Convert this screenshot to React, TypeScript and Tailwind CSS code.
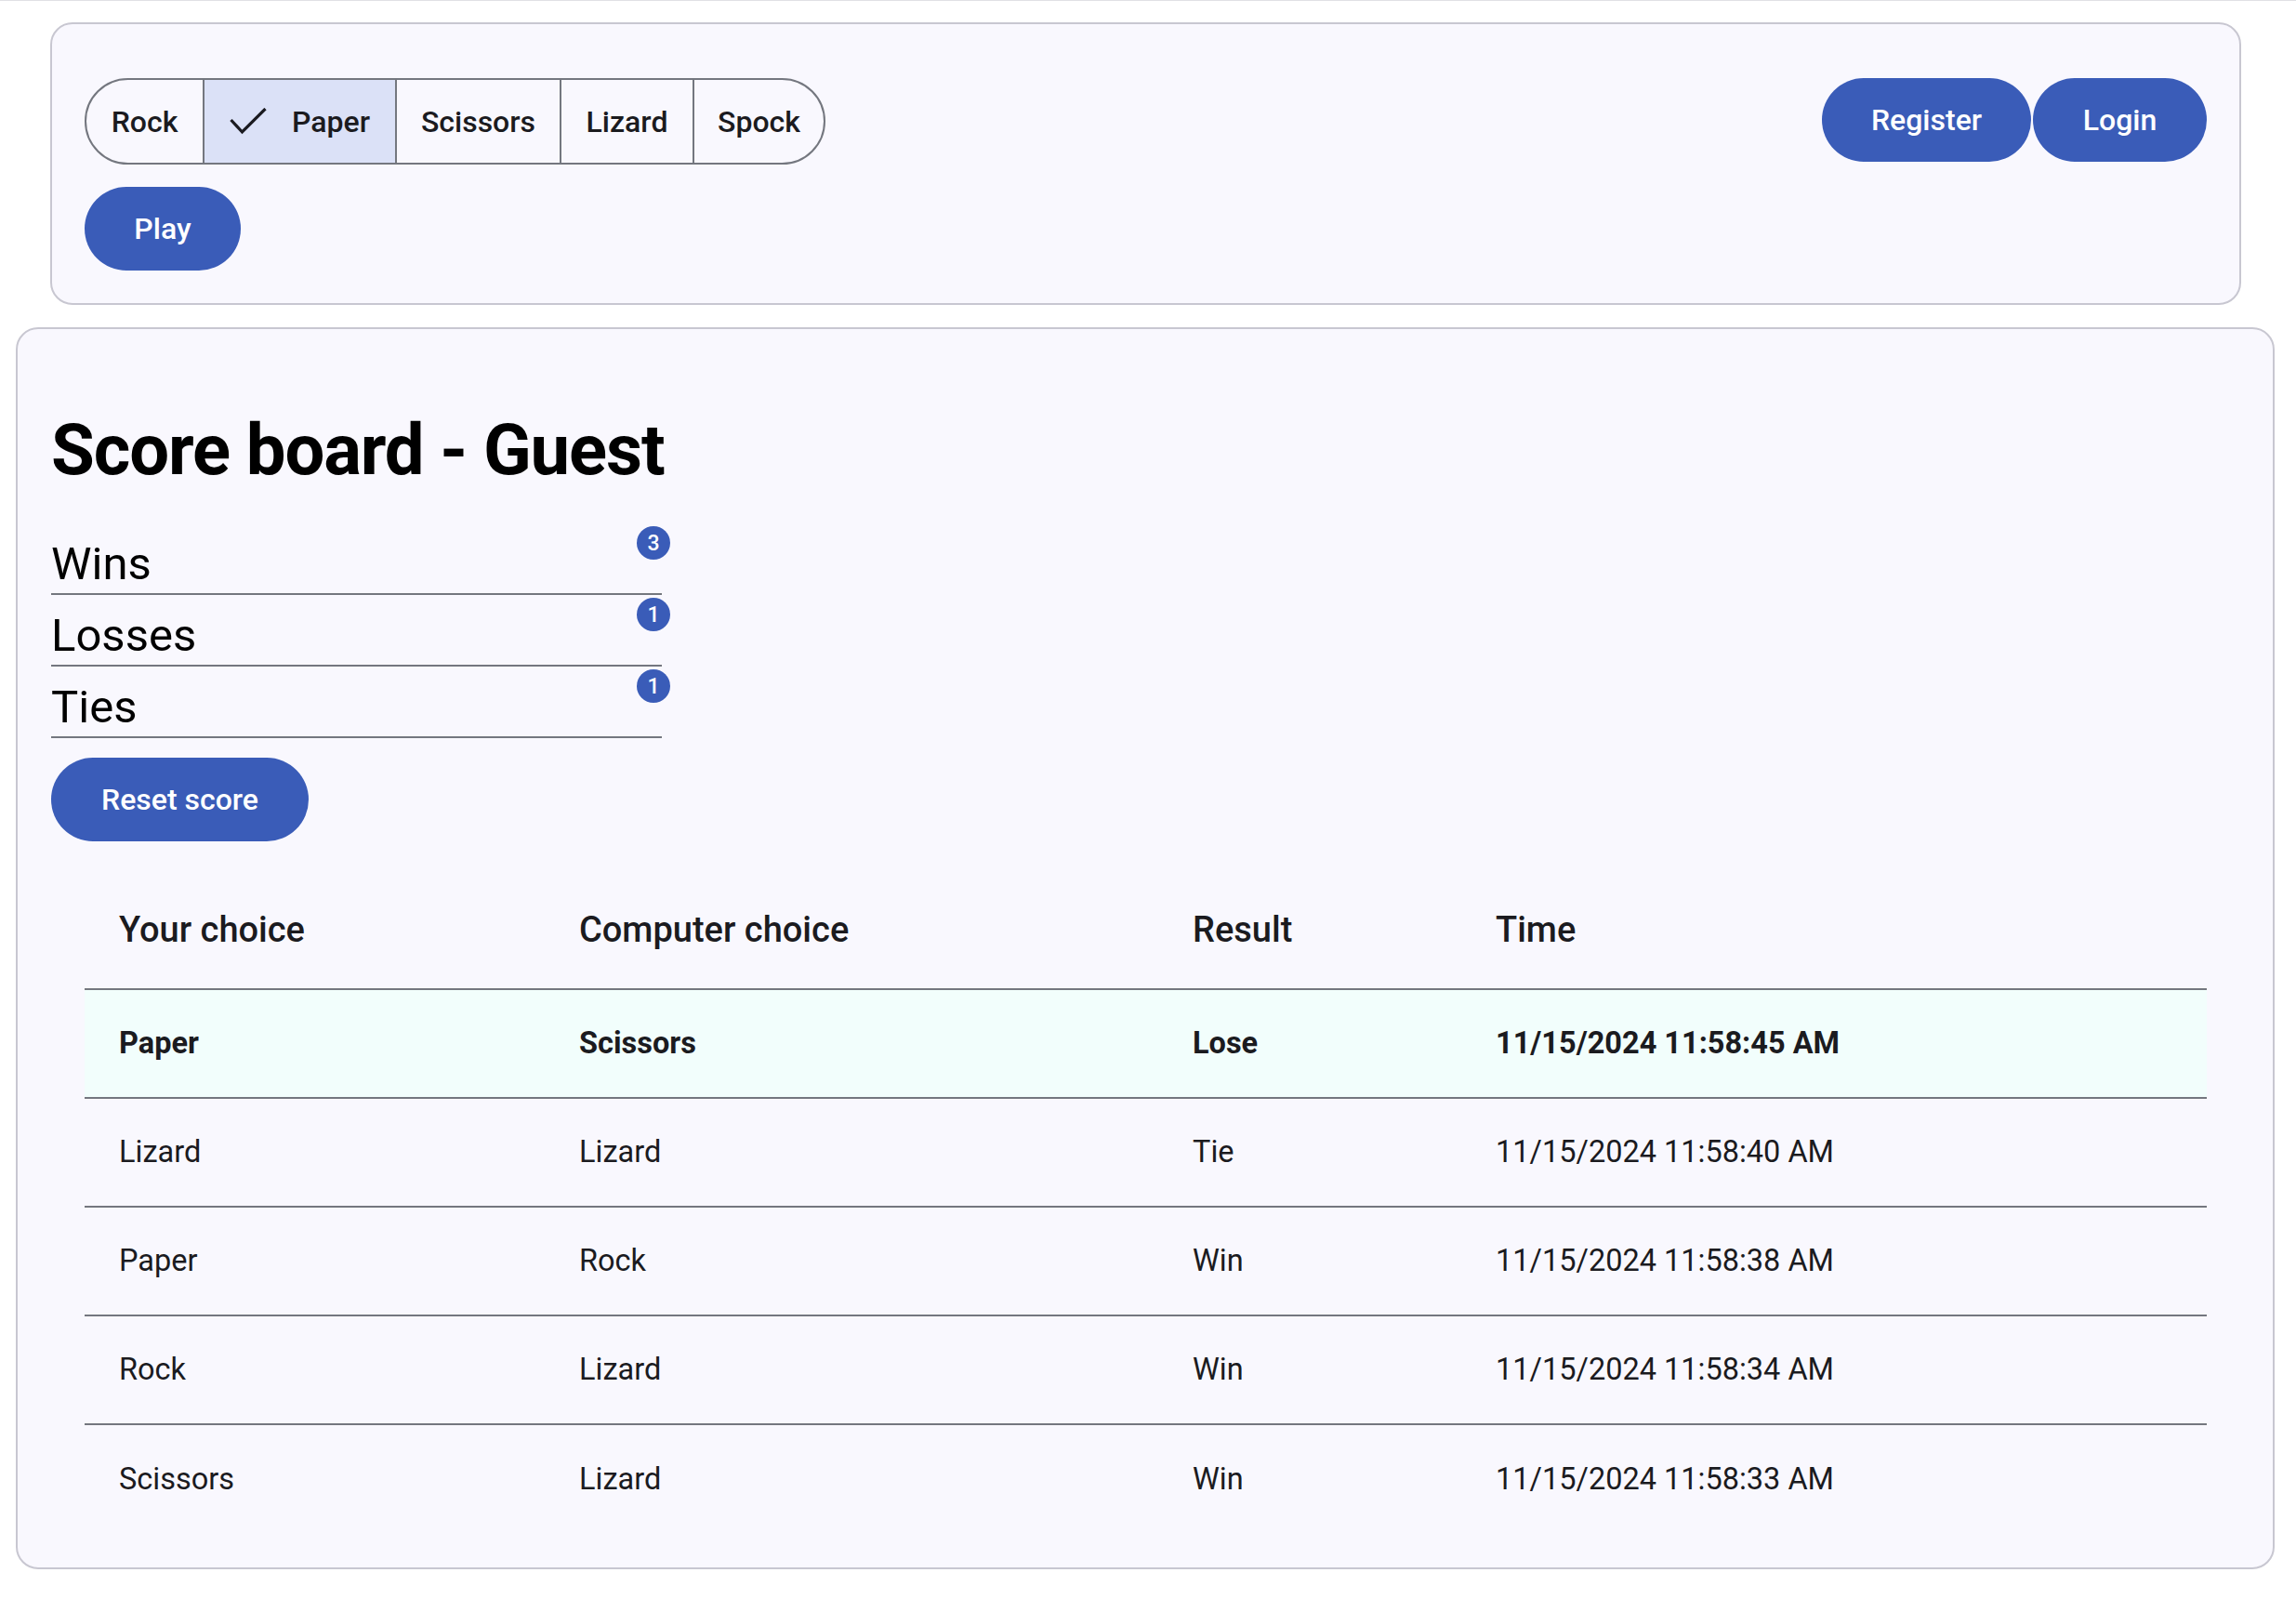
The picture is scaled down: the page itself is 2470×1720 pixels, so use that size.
import React from 'react';

const choices = ['Rock', 'Paper', 'Scissors', 'Lizard', 'Spock'];

const segmentWidths: Record<string, string> = {
  Rock: 'w-[125px]',
  Paper: 'w-[207px]',
  Scissors: 'w-[177px]',
  Lizard: 'w-[143px]',
  Spock: 'w-[141px]',
};

const scores = [
  { label: 'Wins', count: 3 },
  { label: 'Losses', count: 1 },
  { label: 'Ties', count: 1 },
];

const history = [
  { you: 'Paper', computer: 'Scissors', result: 'Lose', time: '11/15/2024 11:58:45 AM' },
  { you: 'Lizard', computer: 'Lizard', result: 'Tie', time: '11/15/2024 11:58:40 AM' },
  { you: 'Paper', computer: 'Rock', result: 'Win', time: '11/15/2024 11:58:38 AM' },
  { you: 'Rock', computer: 'Lizard', result: 'Win', time: '11/15/2024 11:58:34 AM' },
  { you: 'Scissors', computer: 'Lizard', result: 'Win', time: '11/15/2024 11:58:33 AM' },
];

function CheckMark() {
  return (
    <svg width="40" height="30" viewBox="0 0 40 30" className="shrink-0">
      <polyline points="1.5,13 13.5,26 38.5,1" fill="none" stroke="#1b1b21" strokeWidth="3.2" />
    </svg>
  );
}

function FilledButton({ label, width }: { label: string; width: string }) {
  return (
    <button className={`${width} h-[90px] rounded-full bg-[#3a5cb8] text-white text-[32px] font-medium flex items-center justify-center`}>
      {label}
    </button>
  );
}

export default function App() {
  const selected = 'Paper';

  return (
    <div className="min-h-screen bg-white font-['Roboto',sans-serif] text-[#1b1b1f]">
      <div className="h-px bg-[#e0e0e5]" />

      {/* controls */}
      <div className="ml-[54px] mr-[59px] mt-[23px] rounded-[24px] border-2 border-[#c8c7d1] bg-[#f9f8fe] px-[35px] pt-[58px] pb-[35px] flex justify-between items-start">
        <div className="flex flex-col gap-[24px] items-start">
          <div className="flex h-[93px] rounded-full border-2 border-[#74777f] overflow-hidden">
            {choices.map((c, i) => (
              <div
                key={c}
                className={`${segmentWidths[c]} h-full flex items-center justify-center gap-[27px] text-[32px] font-medium ${i > 0 ? 'border-l-2 border-[#74777f]' : ''} ${c === selected ? 'bg-[#dbe1f7]' : ''}`}
              >
                {c === selected && <CheckMark />}
                <span>{c}</span>
              </div>
            ))}
          </div>
          <FilledButton label="Play" width="w-[168px]" />
        </div>
        <div className="flex gap-[2px]">
          <FilledButton label="Register" width="w-[225px]" />
          <FilledButton label="Login" width="w-[187px]" />
        </div>
      </div>

      {/* score board */}
      <div className="ml-[17px] mr-[23px] mt-[24px] rounded-[24px] border-2 border-[#c8c7d1] bg-[#f9f8fe] px-[36px] pt-[85px] pb-[37px]">
        <div className="w-[657px]">
          <h1 className="text-[76px] font-bold text-black leading-[normal] tracking-[-1.1px] whitespace-nowrap">Score board - Guest</h1>
          <div className="mt-[34px]">
            {scores.map((s) => (
              <div key={s.label} className="relative h-[77px] border-b-2 border-[#74777f] flex items-end pb-[3px]">
                <span className="text-[49px] text-black leading-[normal]">{s.label}</span>
                <span className="absolute top-[3px] right-[-9px] w-[36px] h-[36px] rounded-full bg-[#3a5cb8] text-white text-[23px] font-medium leading-none flex items-center justify-center">
                  {s.count}
                </span>
              </div>
            ))}
          </div>
          <div className="mt-[21px]">
            <FilledButton label="Reset score" width="w-[277px]" />
          </div>
        </div>

        <table className="mt-[33px] mx-[36px] w-[2283px] border-collapse table-fixed">
          <colgroup>
            <col className="w-[495px]" />
            <col className="w-[660px]" />
            <col className="w-[326px]" />
            <col className="w-[802px]" />
          </colgroup>
          <thead>
            <tr className="h-[126px] border-b-2 border-[#74777f]">
              {['Your choice', 'Computer choice', 'Result', 'Time'].map((h) => (
                <th key={h} className="pl-[37px] text-left text-[38px] font-medium">
                  {h}
                </th>
              ))}
            </tr>
          </thead>
          <tbody>
            {history.map((r, i) => (
              <tr
                key={i}
                className={`h-[117px] text-[32.5px] ${i < history.length - 1 ? 'border-b-2 border-[#74777f]' : ''} ${i === 0 ? 'bg-[#f2fefc] font-bold' : ''}`}
              >
                <td className="pl-[37px]">{r.you}</td>
                <td className="pl-[37px]">{r.computer}</td>
                <td className="pl-[37px]">{r.result}</td>
                <td className="pl-[37px]">{r.time}</td>
              </tr>
            ))}
          </tbody>
        </table>
      </div>
    </div>
  );
}
